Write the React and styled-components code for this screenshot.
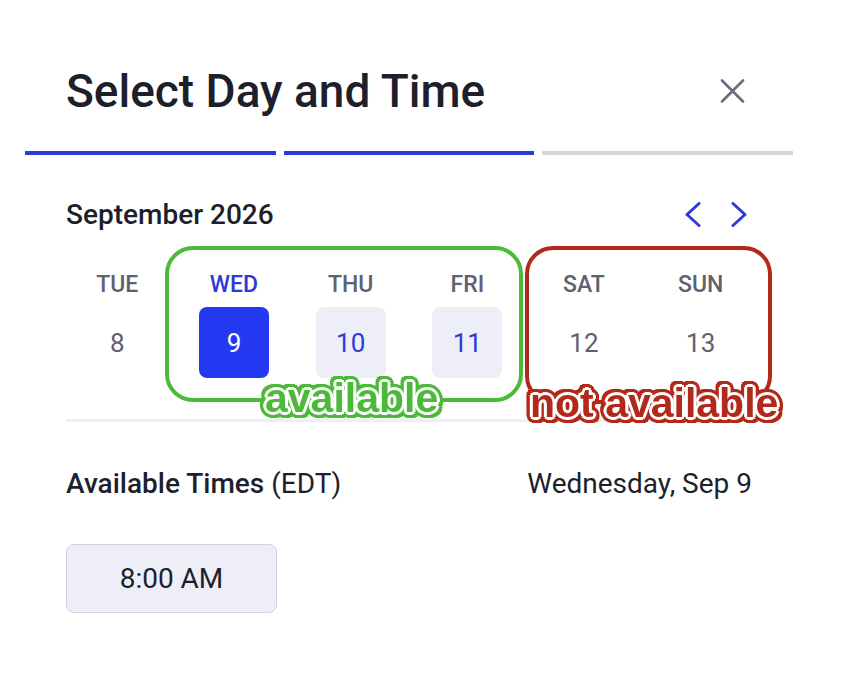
import React from 'react';
import styled, { createGlobalStyle } from 'styled-components';

const colors = {
  darkText: '#1d1f2c',
  grayText: '#5f6171',
  blue: '#2b3bd6',
  selected: '#2639f2',
  lightBox: '#eeeef8',
  track: '#d5d6dd',
  divider: '#eeeef6',
  green: '#4cb93a',
  red: '#b2291b',
};

const GlobalStyle = createGlobalStyle`
  body {
    margin: 0;
    background: #ffffff;
    font-family: Roboto, "Noto Sans", sans-serif;
    color: ${colors.darkText};
  }
`;

const Panel = styled.div`
  position: relative;
  width: 864px;
  height: 674px;
  padding-top: 60px;
  box-sizing: border-box;
  overflow: hidden;
`;

const Header = styled.div`
  display: flex;
  align-items: center;
  justify-content: space-between;
  height: 62px;
  padding: 0 119px 0 66px;
`;

const Title = styled.h1`
  margin: 0;
  font-size: 46px;
  font-weight: 500;
  letter-spacing: 0;
  color: ${colors.darkText};
`;

const IconButton = styled.button`
  display: flex;
  align-items: center;
  justify-content: center;
  padding: 0;
  border: 0;
  background: none;
  cursor: pointer;
`;

const Progress = styled.div`
  display: flex;
  gap: 8px;
  width: 768px;
  margin: 29px 0 0 25px;
`;

const Segment = styled.div`
  flex: 1;
  height: 4px;
  background: ${(p) => (p.$done ? colors.blue : colors.track)};
`;

const MonthRow = styled.div`
  display: flex;
  align-items: center;
  justify-content: space-between;
  height: 32px;
  margin-top: 43px;
  padding: 0 117px 0 66px;
`;

const Month = styled.h2`
  margin: 0;
  font-size: 28px;
  font-weight: 500;
  color: ${colors.darkText};
`;

const Arrows = styled.div`
  display: flex;
  gap: 30px;
`;

const DayGrid = styled.div`
  display: grid;
  grid-template-columns: repeat(6, 1fr);
  width: 700px;
  margin: 40px 0 0 59px;
`;

const Day = styled.div`
  display: flex;
  flex-direction: column;
  align-items: center;
  gap: 7px;
`;

const DayName = styled.div`
  height: 30px;
  line-height: 30px;
  font-size: 23px;
  font-weight: 500;
  color: ${(p) => (p.$active ? colors.blue : colors.grayText)};
`;

const DateBox = styled.div`
  display: flex;
  align-items: center;
  justify-content: center;
  width: 70px;
  height: 71px;
  border-radius: 8px;
  font-size: 26px;
  background: ${(p) =>
    p.$state === 'selected' ? colors.selected : p.$state === 'open' ? colors.lightBox : 'transparent'};
  color: ${(p) =>
    p.$state === 'selected' ? '#ffffff' : p.$state === 'open' ? colors.blue : colors.grayText};
`;

const Divider = styled.hr`
  margin: 41px 112px 0 66px;
  border: 0;
  height: 3px;
  background: ${colors.divider};
`;

const TimesRow = styled.div`
  display: flex;
  align-items: center;
  justify-content: space-between;
  height: 30px;
  margin-top: 46px;
  padding: 0 112px 0 66px;
  font-size: 28px;
  color: ${colors.darkText};
`;

const Strong = styled.span`
  font-weight: 500;
`;

const SlotList = styled.div`
  display: flex;
  margin-top: 46px;
  padding-left: 66px;
`;

const Slot = styled.button`
  width: 211px;
  height: 69px;
  border: 1px solid #d2d2de;
  border-radius: 8px;
  background: ${colors.lightBox};
  font-family: Roboto, sans-serif;
  font-size: 28px;
  color: ${colors.darkText};
`;

// annotation boxes drawn over the calendar
const Callout = styled.div`
  position: absolute;
  left: ${(p) => p.$left}px;
  top: ${(p) => p.$top}px;
  width: ${(p) => p.$width}px;
  height: ${(p) => p.$height}px;
  box-sizing: border-box;
  border: 4px solid ${(p) => p.$color};
  border-radius: 28px;
  pointer-events: none;
`;

const CalloutLabel = styled.span`
  position: absolute;
  left: ${(p) => p.$left}px;
  top: ${(p) => p.$top}px;
  font-family: "Liberation Sans", Arial, sans-serif;
  font-weight: 700;
  font-size: 41px;
  line-height: 1;
  white-space: nowrap;
  color: ${(p) => p.$color};
  text-shadow: 2px 0 0 #fff, -2px 0 0 #fff, 0 2px 0 #fff, 0 -2px 0 #fff,
    2px 2px 0 #fff, -2px -2px 0 #fff, 2px -2px 0 #fff, -2px 2px 0 #fff,
    3px 0 0 #fff, -3px 0 0 #fff, 0 3px 0 #fff, 0 -3px 0 #fff;
  filter: drop-shadow(2px 0 0 ${(p) => p.$color}) drop-shadow(-2px 0 0 ${(p) => p.$color})
    drop-shadow(0 2px 0 ${(p) => p.$color}) drop-shadow(0 -2px 0 ${(p) => p.$color})
    drop-shadow(1px 1px 0 ${(p) => p.$color}) drop-shadow(-1px -1px 0 ${(p) => p.$color});
`;

const days = [
  { name: 'TUE', date: 8, state: 'off' },
  { name: 'WED', date: 9, state: 'selected' },
  { name: 'THU', date: 10, state: 'open' },
  { name: 'FRI', date: 11, state: 'open' },
  { name: 'SAT', date: 12, state: 'off' },
  { name: 'SUN', date: 13, state: 'off' },
];

const Chevron = ({ dir }) => (
  <svg width="16" height="25" viewBox="0 0 16 25" fill="none">
    <polyline
      points={dir === 'left' ? '14,1.5 2,12.5 14,23.5' : '2,1.5 14,12.5 2,23.5'}
      stroke={colors.blue}
      strokeWidth="3"
      strokeLinecap="round"
      strokeLinejoin="round"
    />
  </svg>
);

export default function App() {
  return (
    <Panel>
      <GlobalStyle />
      <Header>
        <Title>Select Day and Time</Title>
        <IconButton aria-label="Close">
          <svg width="25" height="24" viewBox="0 0 25 24">
            <path d="M2 1.5 L23 22.5 M23 1.5 L2 22.5" stroke="#6b6d7b" strokeWidth="2.6" strokeLinecap="round" />
          </svg>
        </IconButton>
      </Header>

      <Progress>
        <Segment $done />
        <Segment $done />
        <Segment />
      </Progress>

      <MonthRow>
        <Month>September 2026</Month>
        <Arrows>
          <IconButton aria-label="Previous week">
            <Chevron dir="left" />
          </IconButton>
          <IconButton aria-label="Next week">
            <Chevron dir="right" />
          </IconButton>
        </Arrows>
      </MonthRow>

      <DayGrid>
        {days.map((d) => (
          <Day key={d.name}>
            <DayName $active={d.state === 'selected'}>{d.name}</DayName>
            <DateBox $state={d.state}>{d.date}</DateBox>
          </Day>
        ))}
      </DayGrid>

      <Divider />

      <TimesRow>
        <span>
          <Strong>Available Times</Strong> (EDT)
        </span>
        <span>Wednesday, Sep 9</span>
      </TimesRow>

      <SlotList>
        <Slot>8:00 AM</Slot>
      </SlotList>

      <Callout $left={165} $top={246} $width={358} $height={156} $color={colors.green} />
      <Callout $left={525} $top={246} $width={247} $height={158} $color={colors.red} />
      <CalloutLabel $left={265} $top={378} $color={colors.green}>available</CalloutLabel>
      <CalloutLabel $left={530} $top={383} $color={colors.red}>not available</CalloutLabel>
    </Panel>
  );
}
